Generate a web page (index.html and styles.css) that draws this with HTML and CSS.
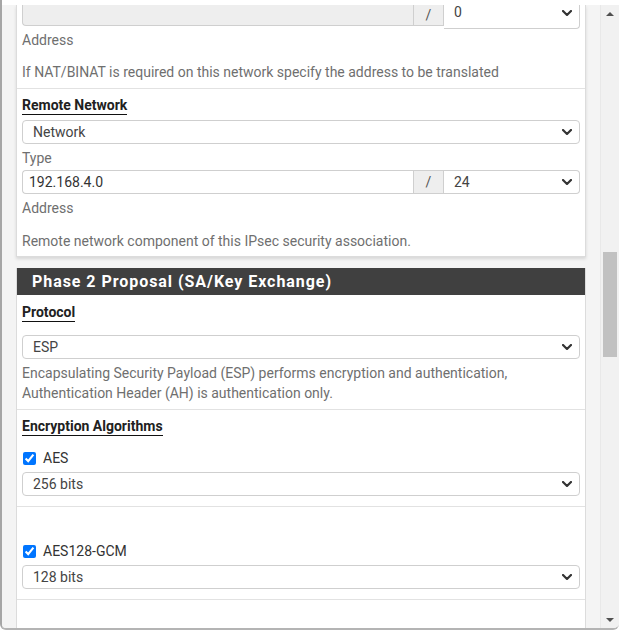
FILE: index.html
```html
<!DOCTYPE html>
<html>
<head>
<meta charset="utf-8">
<link rel="stylesheet" href="styles.css">
</head>
<body>
<div class="window">
  <div class="topband"></div>
  <div class="main">
    <div class="content">
      <div class="panel panel-first">
        <div class="section">
          <div class="input-group ig-cut">
            <div class="ig-input disabled"></div>
            <div class="ig-addon">/</div>
            <div class="ig-select"><span>0</span><svg class="chev" viewBox="0 0 10 6"><polyline points="1,1 5,5 9,1"/></svg></div>
          </div>
          <div class="help first-help">Address</div>
          <div class="help gap">If NAT/BINAT is required on this network specify the address to be translated</div>
        </div>
        <div class="section">
          <div class="label"><span>Remote Network</span></div>
          <div class="select sel-net"><span>Network</span><svg class="chev" viewBox="0 0 10 6"><polyline points="1,1 5,5 9,1"/></svg></div>
          <div class="help tight">Type</div>
          <div class="input-group">
            <div class="ig-input">192.168.4.0</div>
            <div class="ig-addon">/</div>
            <div class="ig-select"><span>24</span><svg class="chev" viewBox="0 0 10 6"><polyline points="1,1 5,5 9,1"/></svg></div>
          </div>
          <div class="help tight">Address</div>
          <div class="help gap last">Remote network component of this IPsec security association.</div>
        </div>
      </div>

      <div class="panel panel-second">
        <div class="panel-heading">Phase 2 Proposal (SA/Key Exchange)</div>
        <div class="section">
          <div class="label label-proto"><span>Protocol</span></div>
          <div class="select sel-proto"><span>ESP</span><svg class="chev" viewBox="0 0 10 6"><polyline points="1,1 5,5 9,1"/></svg></div>
          <div class="help desc">Encapsulating Security Payload (ESP) performs encryption and authentication,<br>Authentication Header (AH) is authentication only.</div>
        </div>
        <div class="section">
          <div class="label"><span>Encryption Algorithms</span></div>
          <label class="check check-first"><input type="checkbox" checked><span>AES</span></label>
          <div class="select sel-small"><span>256 bits</span><svg class="chev" viewBox="0 0 10 6"><polyline points="1,1 5,5 9,1"/></svg></div>
        </div>
        <div class="section">
          <label class="check check-second"><input type="checkbox" checked><span>AES128-GCM</span></label>
          <div class="select sel-small"><span>128 bits</span><svg class="chev" viewBox="0 0 10 6"><polyline points="1,1 5,5 9,1"/></svg></div>
        </div>
        <div class="section empty"></div>
      </div>
    </div>
    <div class="scrollbar">
      <div class="sb-btn"><svg viewBox="0 0 8 4"><polygon points="0,4 4,0 8,4"/></svg></div>
      <div class="sb-track"><div class="sb-thumb"></div></div>
      <div class="sb-btn"><svg viewBox="0 0 8 4"><polygon points="0,0 8,0 4,4"/></svg></div>
    </div>
  </div>
</div>
</body>
</html>
```

FILE: styles.css
```css
* { box-sizing: border-box; }
html, body { margin: 0; padding: 0; }
body {
  width: 619px;
  height: 632px;
  overflow: hidden;
  background: #ffffff;
  font-family: Roboto, "Liberation Sans", sans-serif;
  font-size: 14px;
  color: #212121;
}
.window {
  width: 619px;
  height: 630px;
  display: flex;
  flex-direction: column;
  border-left: 2px solid #a6a6a6;
  border-bottom: 2px solid #b4b4b4;
  border-bottom-left-radius: 6px;
  border-bottom-right-radius: 6px;
  overflow: hidden;
  background: #f4f4f4;
}
.topband { height: 5px; background: #ffffff; flex: none; }
.main { flex: 1; display: flex; min-height: 0; }
.content {
  width: 598px;
  flex: none;
  padding: 0 14px;
  background: #f4f4f4;
  overflow: hidden;
}
.panel {
  background: #ffffff;
  border: 1px solid #dcdcdc;
}
.panel-first {
  border-top: 0;
  box-shadow: 0 2px 3px rgba(0,0,0,0.12);
}
.panel-second {
  margin-top: 11px;
  border-top: 0;
  height: 400px;
}
.section {
  padding: 0 5px;
  border-bottom: 1px solid #e2e2e2;
  display: flex;
  flex-direction: column;
}
.panel-first .section:last-child { border-bottom: 0; }
.help {
  color: #6f6f6f;
  line-height: 20px;
}
.first-help { margin-top: 4px; }
.gap { margin-top: 12px; margin-bottom: 6px; }
.gap.last { margin-top: 11px; margin-bottom: 5px; }
.tight { margin-top: 4px; margin-bottom: 2px; }
.label { margin-top: 7px; line-height: 18px; font-weight: 700; }
.label-proto { margin-top: 8px; }
.label span {
  display: inline-block;
  border-bottom: 1px solid #111;
  line-height: 18px;
  color: #212121;
}
.select, .ig-select {
  height: 24px;
  border: 1px solid #cfcfcf;
  border-radius: 4px;
  display: flex;
  align-items: center;
  justify-content: space-between;
  padding: 0 7px 0 10px;
  color: #444;
}
.section > .select { margin-top: 6px; }
.section > .sel-net { margin-top: 5px; }
.chev { width: 10px; height: 6px; }
.chev polyline { fill: none; stroke: #333; stroke-width: 2.2; stroke-linecap: round; stroke-linejoin: round; }
.input-group {
  display: flex;
  height: 24px;
}
.ig-cut { height: 21px; }
.ig-cut > div { border-top: 0; }
.ig-cut .ig-input { border-top-left-radius: 0; }
.ig-cut .ig-select { border-top-right-radius: 0; }
.ig-input {
  width: 391px;
  border: 1px solid #cfcfcf;
  border-right: 0;
  border-radius: 4px 0 0 4px;
  padding: 0 6px;
  display: flex;
  align-items: center;
  color: #333;
}
.ig-input.disabled { background: #eeeeee; }
.ig-addon {
  width: 31px;
  background: #eeeeee;
  border: 1px solid #cfcfcf;
  display: flex;
  align-items: center;
  justify-content: center;
  color: #555;
}
.ig-select {
  flex: 1;
  border-left: 0;
  border-radius: 0 4px 4px 0;
  padding-left: 10px;
}
.ig-cut .ig-select { padding-top: 0; align-items: flex-start; }
.ig-cut .ig-select span { line-height: 14px; }
.ig-cut .ig-select .chev { margin-top: 5px; }
.panel-heading {
  height: 27px;
  background: #404040;
  color: #ffffff;
  font-weight: 700;
  font-size: 16px;
  letter-spacing: 0.95px;
  line-height: 27px;
  padding-left: 15px;
}
.section > .sel-proto { margin-top: 13px; }
.desc { margin-top: 4px; margin-bottom: 6px; }
.check {
  display: flex;
  align-items: center;
  height: 20px;
  color: #333;
}
.check input {
  margin: 0 7px 0 1px;
  width: 13px;
  height: 13px;
}
.check-first { margin-top: 12px; }
.check-second { margin-top: 34px; }
.section > .sel-small { margin-top: 4px; margin-bottom: 10px; }
.section.empty { border-bottom: 0; }
.scrollbar {
  width: 19px;
  flex: none;
  background: #f1f1f1;
  display: flex;
  flex-direction: column;
  border-left: 1px solid #e8e8e8;
}
.sb-btn {
  height: 17px;
  display: flex;
  align-items: center;
  justify-content: center;
  flex: none;
}
.sb-btn svg { width: 8px; height: 4px; }
.sb-btn polygon { fill: #505050; }
.sb-track { flex: 1; padding: 230px 2px 0 2px; }
.sb-thumb { height: 105px; background: #c1c1c1; }
```
